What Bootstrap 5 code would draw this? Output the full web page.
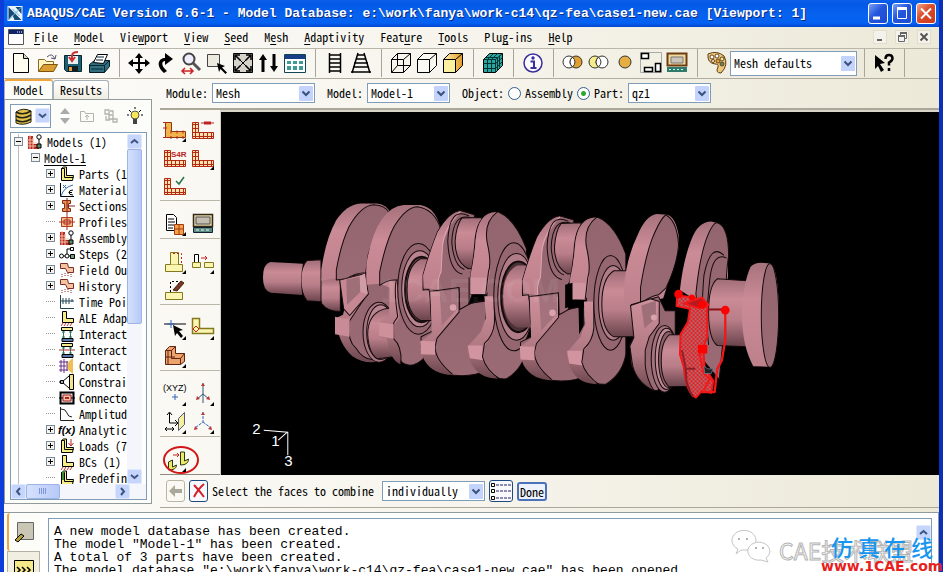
<!DOCTYPE html>
<html lang="en">
<head>
<meta charset="utf-8">
<meta name="viewport" content="width=device-width, initial-scale=1">
<title>ABAQUS/CAE Version 6.6-1</title>
<link rel="stylesheet" href="https://cdn.jsdelivr.net/npm/bootstrap@5.3.0/dist/css/bootstrap.min.css">
<style>
body{font-family:"Noto Sans Mono CJK SC","Liberation Mono",monospace;font-size:12px;line-height:16px;color:#000;background:#0a3fd6;overflow:hidden}
svg{display:block;flex:none}
button{padding:0;border:0;background:none;color:inherit;font:inherit}
.frame{border-left:4px solid #0c3ddb;border-right:4px solid #0b2fb8;background:linear-gradient(90deg,#fcfbf8,#f6f4ec 50%,#ece9d8)}
.titlebar{height:27px;background:linear-gradient(#0b5fe8,#0458e6 15%,#0662ee 50%,#0561f2 85%,#0347cf);color:#fff;padding:0 3px 0 3px}
.titlebar h1{font:bold 13px/27px "Liberation Mono",monospace;text-shadow:1px 1px 0 #0a2a80}
.winbtn{width:20px;height:21px;border:1px solid #fff;border-radius:3px;background:linear-gradient(135deg,#7ba0f5,#2456dd 45%,#1b4bd0)}
.winbtn.close-x{background:linear-gradient(135deg,#f0a48c,#dd4a29 45%,#c93a1c)}
.menus{height:22px;border-bottom:1px solid #b9b6aa;gap:10px}
.menus a{color:#000;text-decoration:none}
.menus u,.tree u{text-underline-offset:2px}
.mdi{width:14px;height:14px;background:#f4f2ea;border:1px solid #e1ded0}
.tools{height:30px;border-bottom:1px solid #b0ada0;padding-left:4px}
.tbtn{width:26px;height:26px;display:grid;place-items:center;flex:none}
.vsep{width:14px;height:28px;flex:none;background:linear-gradient(#a9a699,#a9a699) center/1px 100% no-repeat}
.form-select.cmb{--bs-form-select-bg-img:url("data:image/svg+xml,%3Csvg xmlns='http://www.w3.org/2000/svg' width='14' height='15'%3E%3Crect width='14' height='15' rx='1' fill='%23c3d3fb'/%3E%3Cpath d='M3.500 5.500l3.500 3.500 3.500-3.500' fill='none' stroke='%2339527c' stroke-width='2'/%3E%3C/svg%3E");background:#fff var(--bs-form-select-bg-img) right 1px center/14px 15px no-repeat;height:20px;border:1px solid #7f9db9;border-radius:0;padding:0 16px 0 3px;font-size:12px;line-height:16px;color:#000}
.cmb.tall{height:25px}
.w100{width:103px}.w80{width:83px}.w127{width:127px}
.side{width:148px;flex:none}
.tabs button{height:19px;border:1px solid #a5b0b8;border-bottom:0;border-radius:3px 3px 0 0;background:linear-gradient(#fff,#efece0)}
.tabs button.on{height:20px;width:49px;border-top:2px solid #f0a63a;background:#fcfcf9}
.tabs button:last-child{width:56px}
.sidebox{border:1px solid #919b9c;background:#fcfcf9;padding:4px 4px 3px 5px}
.combo{width:41px;height:24px;border:1px solid #7f9db9;background:#fff}
.treebox{border:1px solid #7f9db9;background:#fff;padding-top:1px}
.tree{background-image:linear-gradient(90deg,transparent 7px,#bbb 7px,#bbb 8px,transparent 8px)}
.trow{height:16px;white-space:nowrap;display:flex;align-items:center;gap:4px;padding-left:3px}
.trow.k{padding-left:35px}
.trow i{flex:none}
.ex{width:9px;height:9px;border:1px solid #7b8a9a;background:linear-gradient(90deg,#000,#000) center/5px 1px no-repeat,#f4f2ec}
.ex.pl{background:linear-gradient(#000,#000) center/5px 1px no-repeat,linear-gradient(#000,#000) center/1px 5px no-repeat,#f4f2ec}
.no{width:9px;height:1px;border-top:1px dotted #999}
.sb{background:#f5f6fb;flex:none}
.thumb{background:linear-gradient(90deg,#d5e1fd,#b7c9f7);border:1px solid #9db4e8;border-radius:2px}
.sbtn{width:15px;height:15px;background:#c6d5fc;border:1px solid #dfe8fe;border-radius:2px;display:grid;place-items:center;flex:none}
.ctx{height:31px;border-bottom:2px solid #aca899;padding-left:6px}
.ctx input{appearance:none;width:13px;height:13px;border:1px solid #33608c;border-radius:50%;background:#fff;margin:0}
.ctx input:checked{background:radial-gradient(circle,#2fa82f 0 2px,#fff 3px)}
.toolbox{width:61px;flex:none;border-right:1px solid #d6d2c2}
.tg{display:grid;grid-template-columns:28px 28px;grid-auto-rows:28px;padding:9px 0 0 1px;border-bottom:1px solid #bbb7a8}
.tg:first-child{padding-top:6px}
.tg:last-child{border-bottom-color:#8d8a7f}
.tg button{display:grid;place-items:center;position:relative}
.tg .fly::after{content:"";position:absolute;right:3px;bottom:2px;border-left:4px solid transparent;border-bottom:4px solid #000}
.view{background:#000;border-top:2px solid #d8d5c8;min-width:0;min-height:0}
.prompt{height:33px;border-bottom:1px solid #aca899;padding-left:6px}
.pbtn{width:19px;height:22px;border:1px solid #b9b6a6;border-radius:3px;display:grid;place-items:center}
.pbtn.b{border-color:#1c4a80;background:#f7f9fd}
.done{height:19px;width:30px;border:2px solid #4b72b8;border-radius:3px;background:#eef2fb;line-height:13px}
.msgarea{height:60px;overflow:hidden;border-top:1px solid #919b9c;flex:none}
.mt{width:36px;flex:none;padding-left:3px}
.mt button{display:grid;place-items:center;width:33px;height:38px}
.mt .on{border-left:2px solid #eda73c;border-radius:3px;background:#fcfcf9}
.mt .off{border:1px solid #b5b2a4;background:#f1eee2}
.msg{border:1px solid #7f9db9;background:#fff;font:13px/13px "Liberation Mono",monospace;padding:6px 0 0 5px;white-space:pre;height:80px}
.msgwrap{border-right:1px solid #919b9c;padding:5px 6px 0 8px;background:#fff}
.wm{position:absolute;right:0;bottom:0;width:224px;height:52px}
</style>
<script src="https://cdn.jsdelivr.net/npm/bootstrap@5.3.0/dist/js/bootstrap.bundle.min.js"></script>
</head>
<body>
<svg width="0" height="0" class="position-absolute" aria-hidden="true">
<defs>
<linearGradient id="au"><stop offset="0" stop-color="#fff3b0"/><stop offset="1" stop-color="#e09a25"/></linearGradient>
<linearGradient id="cy" x2="0" y2="1"><stop offset="0" stop-color="#a06d77"/><stop offset=".3" stop-color="#ca8b96"/><stop offset=".6" stop-color="#b97e89"/><stop offset="1" stop-color="#69434b"/></linearGradient>
<linearGradient id="rm" x2="0" y2="1"><stop offset="0" stop-color="#a6727c"/><stop offset=".35" stop-color="#cb8b97"/><stop offset="1" stop-color="#bd818c"/></linearGradient>
<linearGradient id="lo" x2="0" y2="1"><stop offset="0" stop-color="#ce909b"/><stop offset=".6" stop-color="#b17983"/><stop offset="1" stop-color="#6d474e"/></linearGradient>
<linearGradient id="fc" x2="0" y2="1"><stop offset="0" stop-color="#93656f"/><stop offset="1" stop-color="#9b6b75"/></linearGradient>
<pattern id="hx" width="12" height="12" patternUnits="userSpaceOnUse"><path fill="#e81c20" d="M0 0h12v12H0z"/><path fill="#b06a70" d="M0 0h6v6H0zM6 6h6v6H6z"/></pattern>
<pattern id="gr" width="4" height="4" patternUnits="userSpaceOnUse"><path fill="#ffe2ae" d="M0 0h4v4H0z"/><path d="M0 .5h4M.5 0v4" stroke="#b22a14"/></pattern>
</defs>
<symbol id="L" viewBox="0 0 24 20"><path d="M1.500 2.500h6v10h15v6h-21z" fill="url(#gr)" stroke="#b22a14"/></symbol>
<symbol id="Ly" viewBox="0 0 16 16"><path d="M2.500 2.500l2-1.500h3v8.500h7l-1 5h-11z" fill="#f6ec8a" stroke="#000"/><path d="M2.500 2.500h3v9h9" fill="none" stroke="#000"/></symbol>
<symbol id="Lh" viewBox="0 0 16 16"><path d="M3.500 1.500h4v7h7v4h-11z" fill="#f6ec8a" stroke="#000"/><path d="M2 16l2-3m1 3l2-3m1 3l2-3m1 3l2-3" stroke="#c33"/></symbol>
<symbol id="asm" viewBox="0 0 16 16"><path d="M1 2h5v8h6v5H1z" fill="#b22a22"/><path d="M3 1v14M6 4v11M0 6h7M0 9h10M0 12h12" stroke="#f5c0a8"/><circle cx="12" cy="3" r="2.200" fill="#fff" stroke="#000"/><path d="M12 5v5" stroke="#000"/><path d="M10 10h4v4h-4z" fill="#598c68" stroke="#000"/></symbol>
<symbol id="inter" viewBox="0 0 16 16"><path d="M2.500 1.500h11v3h-11z" fill="#f4ea8e" stroke="#000"/><path d="M4.500 5v7m7-7v7M3 6h3m4 0h3m-10 5h3m4 0h3" stroke="#268056"/><path d="M3 12.500h11v3H3z" fill="#5a78a8" stroke="#000"/></symbol>
<symbol id="up" viewBox="0 0 9 9"><path d="M1 6l3.500-3L8 6" fill="none" stroke="#3c5583" stroke-width="2"/></symbol>
<symbol id="fld" viewBox="0 0 16 16"><path d="M1.500 1.500h7l1 4h5v5h-6l-2-4h-5z" fill="#f4c4a0" stroke="#7b2d25"/><path d="M3 12v3m3-4v4m3-4v4m3-3v3" stroke="#8a2a22" stroke-dasharray="1"/></symbol>
<symbol id="base" viewBox="0 0 24 24"><path d="M2.500 14.500h17v7h-17z" fill="#faf5b0" stroke="#83791c"/></symbol>
</svg>

<div class="frame d-flex flex-column vh-100 overflow-hidden">
<header class="titlebar d-flex align-items-center gap-1">
  <svg width="16" height="15" viewBox="0 0 15 15"><path fill="#e8f4ff" d="M0 0h15v15H0z"/><path fill="#174a72" d="M1 1l13 13H7L5 9 1 14zM8 1h6v7z"/><path d="M1 14L14 1M5 3l7 7" stroke="#6fb3cf"/></svg>
  <h1 class="m-0 text-nowrap flex-grow-1">ABAQUS/CAE Version 6.6-1 - Model Database: e:\work\fanya\work-c14\qz-fea\case1-new.cae [Viewport: 1]</h1>
  <div class="d-flex gap-1">
    <button class="winbtn" aria-label="Minimize"><svg width="18" height="19"><path d="M4 14h7" stroke="#fff" stroke-width="3"/></svg></button>
    <button class="winbtn" aria-label="Maximize"><svg width="18" height="19"><path d="M4 4.500h10" stroke="#fff" stroke-width="3"/><path d="M4.500 4v10.500h9V4" fill="none" stroke="#fff"/></svg></button>
    <button class="winbtn close-x" aria-label="Close"><svg width="18" height="19"><path d="M4 4.500l10 10m0-10l-10 10" stroke="#fff" stroke-width="2"/></svg></button>
  </div>
</header>
<nav class="menus d-flex align-items-center px-1">
  <svg width="16" height="16" viewBox="0 0 16 16"><path d="M.5.500h15v15H.5z" fill="#fff" stroke="#555"/><path fill="#10246b" d="M1 1h14v4H1z"/><path d="M9 3h5" stroke="#fff" stroke-dasharray="1"/></svg>
  <div class="d-flex gap-3 flex-grow-1 text-nowrap">
  <a href="#"><u>F</u>ile</a><a href="#"><u>M</u>odel</a><a href="#">Vie<u>w</u>port</a><a href="#"><u>V</u>iew</a><a href="#"><u>S</u>eed</a><a href="#">M<u>e</u>sh</a><a href="#"><u>A</u>daptivity</a><a href="#">Feat<u>u</u>re</a><a href="#"><u>T</u>ools</a><a href="#">Plu<u>g</u>-ins</a><a href="#"><u>H</u>elp</a></div>
  <div class="d-flex gap-2 me-1">
    <button class="mdi" aria-label="Minimize viewport"><svg width="12" height="12"><path d="M3 9h5" stroke="#666" stroke-width="2"/></svg></button>
    <button class="mdi" aria-label="Restore viewport"><svg width="12" height="12"><path d="M2.500 5.500h6v5h-6zM4.500 5V2.500h6v5H9" fill="none" stroke="#666"/><path d="M2 5h7M4 2h7" stroke="#666" stroke-width="2"/></svg></button>
    <button class="mdi" aria-label="Close viewport"><svg width="12" height="12"><path d="M2.500 2.500l7 7m0-7l-7 7" stroke="#555" stroke-width="2"/></svg></button>
  </div>
</nav>
<div class="tools d-flex align-items-center">
  <button class="tbtn" aria-label="New"><svg width="24" height="24"><path d="M4.500 2.500h10l5 5v14h-15z" fill="#fffef0" stroke="#000"/><path d="M14.500 2.500v5h5" fill="#ddd6b8" stroke="#000"/></svg></button>
  <button class="tbtn" aria-label="Open"><svg width="24" height="24"><path d="M3.500 20V8.500h6l2 2h7V14" fill="#fff5c0" stroke="#8a6a20"/><path d="M3.500 20.500l5-7h14l-4 7z" fill="#d99d31" stroke="#7b5410"/><path d="M12 6q5-5 8 2m0 0l1-4m-1 4l-4-1" fill="none" stroke="#556"/></svg></button>
  <button class="tbtn" aria-label="Save"><svg width="24" height="24"><path d="M3.500 4.500h17v16h-15l-2-2z" fill="#1d6073" stroke="#0b2530"/><path fill="#e8eff2" d="M7 5h10v8H7z"/><path fill="#101c22" d="M7 15h10v5H7z"/><path fill="#e0a040" d="M8 16h3v4H8z"/><path d="M17 1q-6 0-6 4v4m-3-3l3 4 3-4" fill="none" stroke="#c33" stroke-width="2"/></svg></button>
  <button class="tbtn" aria-label="Print"><svg width="24" height="24"><path d="M2.500 13.500l5-4h15v6l-5 6h-15z" fill="#2f6f7f" stroke="#071c26"/><path d="M6.500 11.500l4-8h10l-4 9z" fill="#fff" stroke="#000"/><path d="M2.500 14.500h15l5-5m-5 5v7M4 18h12M10 6h7m-8 3h7" stroke="#082632" fill="none"/></svg></button>
  <i class="vsep"></i>
  <button class="tbtn" aria-label="Pan"><svg width="24" height="24"><path d="M12 2l4 5h-3v4h5V8l5 4-5 4v-3h-5v5h3l-4 5-4-5h3v-5H6v3l-5-4 5-4v3h5V7H8z"/></svg></button>
  <button class="tbtn" aria-label="Rotate"><svg width="24" height="24"><path d="M11 22C2 14 6 7 12 7V2l8 6-8 6v-4c-3 0-5 4 2 10z"/></svg></button>
  <button class="tbtn" aria-label="Magnify"><svg width="24" height="24"><circle cx="10" cy="8" r="5.500" fill="#eef" stroke="#444" stroke-width="2"/><path d="M14 12l7 7" stroke="#555" stroke-width="3"/><path d="M4 20h9M6 17l-3 3 3 3m5-6l3 3-3 3" fill="none" stroke="#c22" stroke-width="1.500"/></svg></button>
  <button class="tbtn" aria-label="Box zoom"><svg width="26" height="24"><path d="M3.500 3.500h12v12h-12z" fill="#eceadf" stroke="#444"/><path d="M13 12l8 3-3 1.500 5 5-1.500 1.500-5-5-1.500 3z"/></svg></button>
  <button class="tbtn" aria-label="Auto-fit"><svg width="24" height="24"><path d="M2.500 2.500h19v19h-19z" fill="#d5d3ca" stroke="#000"/><path d="M5 5l14 14M19 5L5 19M4 9V4h5m6 0h5v5m0 6v5h-5m-6 0H4v-5" fill="none" stroke="#000" stroke-width="1.500"/><path fill="#d5d3ca" d="M9 9h6v6H9z"/><path d="M9 9l6 6M15 9l-6 6" stroke="#000"/></svg></button>
  <button class="tbtn" aria-label="Cycle views"><svg width="24" height="24"><path d="M6 3l4 6H7.500v12h-3V9H2zM17 21l4-6h-2.500V3h-3v12H13z"/></svg></button>
  <button class="tbtn" aria-label="View table"><svg width="24" height="24"><path d="M1.500 3.500h21v18h-21z" fill="#fff" stroke="#145"/><path fill="#173e86" d="M2 4h20v4H2z"/><path d="M4 10h4v3H4zm6 0h4v3h-4zm6 0h4v3h-4zM4 15h4v4H4zm6 0h4v4h-4zm6 0h4v4h-4z" fill="#409a96"/></svg></button>
  <i class="vsep"></i>
  <button class="tbtn" aria-label="Parallel"><svg width="24" height="24"><path d="M6.500 2v20m11-20v20M6 4h12M6 8h12M6 12h12M6 16h12M6 20h12" stroke="#000" stroke-width="1.500"/></svg></button>
  <button class="tbtn" aria-label="Perspective"><svg width="24" height="24"><path d="M9 2L3 22m12-20l6 20M8 4h8M7 8h10M5 12h14M4 16h16M2 21h20" stroke="#000" stroke-width="1.500"/></svg></button>
  <i class="vsep"></i>
  <button class="tbtn" aria-label="Wireframe"><svg width="24" height="24"><path d="M2.500 8.500h12v13h-12zM8.500 2.500h13v12h-13zM2.500 8.500l6-6m6 6l7-6m-7 19l7-7m-19 7l6-7" fill="none" stroke="#000"/></svg></button>
  <button class="tbtn" aria-label="Hidden line"><svg width="24" height="24"><path d="M2.500 8.500h12v13h-12zl6-6h13l-7 6m7-6v12l-7 7" fill="#faf9f4" stroke="#000"/></svg></button>
  <button class="tbtn" aria-label="Shaded"><svg width="24" height="24"><path d="M2.500 8.500l6-6h13v12l-7 7h-12z" fill="url(#au)" stroke="#000"/><path d="M2.500 8.500h12v13h-12z" fill="#faf0a0" stroke="#000"/><path d="M14.500 8.500l7-6" stroke="#000"/></svg></button>
  <i class="vsep"></i>
  <button class="tbtn" aria-label="Show mesh"><svg width="24" height="24"><path d="M2.500 8.500l6-6h13v12l-7 7h-12z" fill="#2aa6a0" stroke="#000"/><path d="M2.500 8.500h12v13m0-13l7-6M6.500 8.500v13m4-13v13m-8-9h12l7-6m-19 11h12l7-7M6.500 8.500l6-6m-2 6l6-6m-12 4h12v13m2-15v12" fill="none" stroke="#033"/></svg></button>
  <i class="vsep"></i>
  <button class="tbtn" aria-label="Query"><svg width="24" height="24"><circle cx="12" cy="12" r="9" fill="#fbfaff" stroke="#3b2f9a" stroke-width="1.500"/><circle cx="12" cy="7" r="1.700" fill="#3b2f9a"/><path d="M9.500 10.500H13V17m-3.500 0h6" stroke="#3b2f9a" stroke-width="2" fill="none"/></svg></button>
  <i class="vsep"></i>
  <button class="tbtn" aria-label="Replace"><svg width="24" height="24"><circle cx="8" cy="11" r="6" fill="#fff" stroke="#333"/><circle cx="15" cy="11" r="6" fill="#e0a030" stroke="#333"/><path d="M11.500 6q5 5 0 10q-5-5 0-10" fill="#fff" stroke="#333"/></svg></button>
  <button class="tbtn" aria-label="Remove"><svg width="24" height="24"><circle cx="8" cy="11" r="6" fill="#f7ec8c" stroke="#333"/><circle cx="15" cy="11" r="6" fill="#fff" stroke="#333"/><path d="M11.500 6q5 5 0 10q-5-5 0-10" fill="#fff" stroke="#333"/></svg></button>
  <button class="tbtn" aria-label="All"><svg width="24" height="24"><circle cx="12" cy="11" r="6" fill="#e5ae43" stroke="#333"/></svg></button>
  <button class="tbtn" aria-label="Layout"><svg width="24" height="24"><path d="M1.500 1.500h21v20h-21z" fill="none" stroke="#aaa"/><path d="M2.500 2.500h7v5h-7zM16.500 12.500h5v8h-5zM5.500 16.500h8v4h-8z" fill="#fff" stroke="#000" stroke-width="1.500"/></svg></button>
  <button class="tbtn" aria-label="Manager"><svg width="24" height="24"><path d="M2.500 2.500h19v12h-19z" fill="#f1d9a0" stroke="#6b3d10" stroke-width="2"/><path d="M6 6h12v6H6z" fill="#ccc4b8" stroke="#777"/><path d="M2 16h20v5H2z" fill="#2f7a6a"/><path d="M4 18.500h16" stroke="#bfe" stroke-dasharray="2"/></svg></button>
  <i class="vsep"></i>
  <button class="tbtn" aria-label="Colors"><svg width="24" height="24"><path d="M3 3Q12-1 19 5q5 9-3 17-6 0-3-6 1-3-3-3-8-1-7-10z" fill="#edc77c" stroke="#5b3a10"/><g fill="#fff" stroke="#642"><circle cx="7" cy="6" r="2"/><circle cx="12" cy="5" r="2"/><circle cx="8" cy="10" r="1.500"/><circle cx="13" cy="10" r="2" fill="#e9a72e"/><circle cx="17" cy="8" r="2" fill="#f5ea90"/><circle cx="17" cy="13" r="2" fill="#5a8a60"/></g></svg></button>
  <label class="visually-hidden" for="colr">Color mapping</label>
  <select id="colr" class="form-select cmb w127 tall"><option>Mesh defaults</option></select>
  <i class="vsep"></i>
  <button class="tbtn" aria-label="Context help"><svg width="24" height="24"><path d="M3 4l10 8-5 1 4 6-3 2-3-6-3 3z"/><path d="M13.500 8q0-4 3.500-4t3.500 3.500q0 2-3.500 4v3M17 17v3" fill="none" stroke="#000" stroke-width="2.500"/></svg></button>
  <i class="vsep"></i>
</div>

<div class="d-flex flex-grow-1 overflow-hidden">
  <aside class="side d-flex flex-column pb-1">
    <div class="tabs d-flex align-items-end" role="tablist"><button class="on" role="tab">Model</button><button role="tab">Results</button></div>
    <div class="sidebox d-flex flex-column flex-grow-1 overflow-hidden">
      <div class="d-flex align-items-center justify-content-between pb-1 pe-1">
        <button class="combo d-flex align-items-center justify-content-between ps-1" aria-label="Database"><svg width="17" height="18"><path d="M1 5q7-5 15-1v11q-8 4-15 1z" fill="#e2c04d" stroke="#221"/><path d="M1 5q7 4 15-1M1 9q7 4 15-1M1 13q7 4 15-1" fill="none" stroke="#221" stroke-width="1.500"/></svg><span class="sbtn"><svg width="9" height="9" viewBox="0 0 9 9"><path d="M1 3l3.500 3L8 3" fill="none" stroke="#3c5583" stroke-width="2"/></svg></span></button>
        <button aria-label="Step"><svg width="12" height="18"><path d="M6 1l5 6H1zM6 17l5-6H1z" fill="#aaa"/></svg></button>
        <button aria-label="Up level"><svg width="16" height="16"><path d="M1.500 3.500h4l1 2h8v8h-13z" fill="none" stroke="#b3b3ab"/><path d="M8 12V7M6 9l2-2 2 2" stroke="#b3b3ab" fill="none"/></svg></button>
        <button aria-label="Link"><svg width="16" height="16"><path d="M2 2h4v4H2zM6 7h4v4H6zM10 11h4v3h-4zM7 3h3v3M3 8v4h4" fill="none" stroke="#b3b3ab" stroke-width="1.300"/></svg></button>
        <button aria-label="Tip"><svg width="16" height="18"><path d="M8 0v2M2 3l2 2m10-2l-2 2M0 8h2m12 0h2" stroke="#000"/><circle cx="8" cy="8" r="4" fill="#f8e858" stroke="#554"/><path d="M6 12h4v5H6z" fill="#444"/></svg></button>
      </div>
      <div class="treebox d-flex flex-column flex-grow-1 overflow-hidden">
        <div class="d-flex flex-grow-1 overflow-hidden">
          <div class="tree flex-grow-1 overflow-hidden" role="tree">
            <div class="trow"><i class="ex"></i><svg width="16" height="16"><use href="#asm"/></svg>Models (1)</div>
            <div class="trow ps-3 ms-1"><i class="ex"></i><u>Model-1</u></div>
            <div class="trow k"><i class="ex pl"></i><svg width="16" height="16"><use href="#Ly"/></svg>Parts (1)</div>
            <div class="trow k"><i class="ex pl"></i><svg width="16" height="16"><path d="M1.500 1v13.500H15" fill="none" stroke="#000"/><path d="M2 14Q5 5 14 3M4 3l3 3M4 6l3-3" fill="none" stroke="#36a"/><path d="M14 8q-4 0-4 2.500t4 2.500m-4-2.500h3" fill="none" stroke="#000"/></svg>Material</div>
            <div class="trow k"><i class="ex pl"></i><svg width="16" height="16"><path d="M3.500 2.500h8v3h-2v5h2v3h-8v-3h2v-5h-2z" fill="#f0924c" stroke="#7b2d15"/><path d="M8 0v16M8 8h8" stroke="#822"/></svg>Sections</div>
            <div class="trow k"><i class="no"></i><svg width="16" height="16"><path d="M2.500 3.500h11v9h-11z" fill="#f6b98c" stroke="#b3411c"/><path d="M8 0v16M0 8h16M5 6h6v4H5z" fill="none" stroke="#a32"/></svg>Profiles</div>
            <div class="trow k"><i class="ex pl"></i><svg width="16" height="16"><use href="#asm"/></svg>Assembly</div>
            <div class="trow k"><i class="ex pl"></i><svg width="16" height="16"><circle cx="2.500" cy="10" r="2" fill="#fff" stroke="#000"/><circle cx="8" cy="10" r="2" fill="#fff" stroke="#000"/><path d="M5 10h1m4 0h2M8 8V3h3" stroke="#000" fill="none"/><path d="M11.500 1.500h3v3h-3z" fill="#fff" stroke="#000"/><path d="M11.500 8.500h4v4h-4z" fill="#7a9a7a" stroke="#000"/></svg>Steps (2)</div>
            <div class="trow k"><i class="ex pl"></i><svg width="16" height="16"><use href="#fld"/></svg>Field Ou</div>
            <div class="trow k"><i class="ex pl"></i><svg width="16" height="16"><use href="#fld"/></svg>History O</div>
            <div class="trow k"><i class="no"></i><svg width="16" height="16"><path d="M1.500 1v13.500H15M2 7h13M4 4v6m3-6v6m3-6v6m3-5v3" fill="none" stroke="#245"/></svg>Time Poin</div>
            <div class="trow k"><i class="no"></i><svg width="16" height="16"><use href="#Lh"/></svg>ALE Adap</div>
            <div class="trow k"><i class="no"></i><svg width="16" height="16"><use href="#inter"/></svg>Interact</div>
            <div class="trow k"><i class="no"></i><svg width="16" height="16"><use href="#inter"/><path d="M0 8h16" stroke="#a33"/></svg>Interact</div>
            <div class="trow k"><i class="no"></i><svg width="16" height="16"><path d="M14 0q-12 8 0 16z" fill="#eebf52"/><path d="M2 2v12M5 1v14M8 3v10M0 4h9M0 8h7M0 12h9" stroke="#6a2f8a"/></svg>Contact C</div>
            <div class="trow k"><i class="no"></i><svg width="16" height="16"><path d="M10.500.500h4v15h-4z" fill="#f2e48a" stroke="#000"/><path d="M3 8l7-6M3 8l7 6M0 8h3" stroke="#000"/><path d="M1.500 6.500h3v3h-3z" fill="#9ab" stroke="#000"/></svg>Constrain</div>
            <div class="trow k"><i class="no"></i><svg width="16" height="16"><path d="M1.500 2.500h13v11h-13z" fill="#ddd" stroke="#000" stroke-width="2"/><path d="M4 5h8v6H4z" fill="#f2c0a8" stroke="#a22"/><path d="M6 7h4v2H6z" fill="#a22"/><path d="M0 8h4m8 0h4" stroke="#000"/></svg>Connector</div>
            <div class="trow k"><i class="no"></i><svg width="16" height="16"><path d="M1.500 1v13.500H15M2 3q5 0 6 4t5 4" fill="none" stroke="#222"/></svg>Amplitud</div>
            <div class="trow k"><i class="ex pl"></i><svg width="16" height="16" overflow="visible"><text x="-1" y="12" font-family="Liberation Sans" font-size="11" font-weight="bold" font-style="italic">f(x)</text></svg>Analytic</div>
            <div class="trow k"><i class="ex pl"></i><svg width="16" height="16"><use href="#Ly"/><path d="M12 1v6M9.500 5l2.500 3 2.500-3" stroke="#b22" fill="none"/></svg>Loads (7)</div>
            <div class="trow k"><i class="ex pl"></i><svg width="16" height="16"><use href="#Lh"/></svg>BCs (1)</div>
            <div class="trow k"><i class="no"></i><svg width="16" height="16"><use href="#Ly"/><path d="M4 1v9" stroke="#3a8a3a" stroke-width="2"/></svg>Predefin</div>
          </div>
          <div class="sb d-flex flex-column me-1">
            <button class="sbtn" aria-label="Scroll up"><svg width="9" height="9"><use href="#up"/></svg></button>
            <div class="thumb h-50"></div><div class="flex-grow-1"></div>
            <button class="sbtn" aria-label="Scroll down"><svg width="9" height="9" viewBox="0 0 9 9"><path d="M1 3l3.500 3L8 3" fill="none" stroke="#3c5583" stroke-width="2"/></svg></button>
          </div>
        </div>
        <div class="sb d-flex pe-3">
          <button class="sbtn" aria-label="Scroll left"><svg width="9" height="9"><path d="M6 1L3 4.500 6 8" fill="none" stroke="#3c5583" stroke-width="2"/></svg></button>
          <div class="thumb w-25 px-3 d-grid justify-content-center align-items-center"><svg width="8" height="6"><path d="M.5 0v6m2-6v6m2-6v6m2-6v6" stroke="#7d97d8"/></svg></div><div class="flex-grow-1"></div>
          <button class="sbtn" aria-label="Scroll right"><svg width="9" height="9"><path d="M3 1l3 3.500L3 8" fill="none" stroke="#3c5583" stroke-width="2"/></svg></button>
        </div>
      </div>
    </div>
  </aside>
  <main class="d-flex flex-column flex-grow-1 ms-2 overflow-hidden">
    <form class="ctx d-flex align-items-center text-nowrap">
      <label for="m1" class="me-1">Module:</label><select id="m1" class="form-select cmb w100"><option>Mesh</option></select>
      <label for="m2" class="ms-2 me-1 ps-1">Model:</label><select id="m2" class="form-select cmb w80"><option>Model-1</option></select>
      <span class="ms-2 me-1 ps-1">Object:</span>
      <input type="radio" name="o" id="o1"><label for="o1" class="ms-1 me-1">Assembly</label>
      <input type="radio" name="o" id="o2" checked><label for="o2" class="ms-1 me-1">Part:</label>
      <select class="form-select cmb w80" aria-label="Part"><option>qz1</option></select>
    </form>
    <div class="d-flex flex-grow-1 overflow-hidden">
      <div class="toolbox">
        <div class="tg">
          <button class="fly" aria-label="Seed part"><svg width="24" height="20"><path d="M2.500 2.500h6v9h14v6h-20z" fill="#f2b34c" stroke="#8a3a10"/><path d="M0 2.500h4M0 8h4m-4 9.500h4m4-7v3m6-3v3m6-3v3M8 16v3m6-3v3m6-3v3" stroke="#b22"/></svg></button>
          <button aria-label="Assign controls"><svg width="24" height="20"><use href="#L"/><path d="M10 3h13" stroke="#b22"/><path d="M13 1.500h7v3h-7z" fill="#b22"/></svg></button>
          <button aria-label="Element type"><svg width="24" height="20"><use href="#L"/><text x="8" y="9" font-family="Liberation Sans" font-size="8" font-weight="bold" fill="#b22">S4R</text></svg></button>
          <button class="fly" aria-label="Mesh part"><svg width="24" height="20"><use href="#L"/></svg></button>
          <button aria-label="Verify mesh"><svg width="24" height="20"><use href="#L"/><path d="M13 5l3 3 5-7" fill="none" stroke="#26734d" stroke-width="1.500"/></svg></button>
        </div>
        <div class="tg">
          <button class="fly" aria-label="Create part"><svg width="24" height="24"><path d="M3.500 2.500h7l3 3v13h-10z" fill="#fff" stroke="#000"/><path d="M5 7h6M5 10h7m-7 3h6m-6 3h5" stroke="#000"/><path d="M11.500 12.500h9v10h-9z" fill="#f3a347" stroke="#a33a10"/><path d="M11 17h10m-5-5v11" stroke="#a33a10"/></svg></button>
          <button aria-label="Part manager"><svg width="24" height="24"><path d="M2.500 2.500h19v12h-19z" fill="#e5d6a5" stroke="#33291a" stroke-width="1.500"/><path d="M5 5h14v7H5z" fill="#c4bdb2" stroke="#555"/><path d="M2.500 15.500h19v5h-19z" fill="#5d8a80" stroke="#123"/><path d="M5 18h14" stroke="#dff" stroke-dasharray="3 2"/></svg></button>
        </div>
        <div class="tg">
          <button class="fly" aria-label="Extrude"><svg width="24" height="24"><use href="#base"/><path d="M7.500 14.500v-12h8v12" fill="#faf5b0" stroke="#83791c"/><path d="M10 3.500h8.500V14" fill="none" stroke="#b22" stroke-dasharray="2"/></svg></button>
          <button class="fly" aria-label="Move feature"><svg width="24" height="24"><path d="M1.500 12.500h8v5h-8zM13.500 12.500h9v5h-9z" fill="#faf5b0" stroke="#83791c"/><path d="M3.500 12V4.500h4V12" fill="#fff" stroke="#000"/><path d="M10 8h6m-2-2l2 2-2 2" fill="none" stroke="#c22"/></svg></button>
          <button aria-label="Delete feature"><svg width="24" height="24"><use href="#base"/><path d="M7.500 14V3.500h8V8" fill="none" stroke="#000" stroke-dasharray="2"/><path d="M10 12l8-9 3 2-7 8z" fill="#7b3a20" stroke="#422"/></svg></button>
        </div>
        <div class="tg">
          <button class="fly" aria-label="Partition edge"><svg width="24" height="24"><path d="M1 8h22" stroke="#000"/><path d="M8 4v8M4 8h8" stroke="#36b"/><path d="M10 9l10 5-4 1 4 5-2 2-4-5-2 3z"/></svg></button>
          <button class="fly" aria-label="Partition face"><svg width="24" height="24"><path d="M1.500 2.500h7v10h14v5h-21z" fill="#faf5b0" stroke="#83791c" stroke-width="1.500"/><path d="M5 10l3 3-3 3-3-3z" fill="none" stroke="#c22"/></svg></button>
          <button class="fly" aria-label="Partition cell"><svg width="24" height="24"><path d="M2.500 6.500l4-4h6v7h9v8l-4 3h-15z" fill="#eda36c" stroke="#5f2512"/><path d="M2.500 6.500h6v8h9v6m-9-14l4-4m5 12l4-5M5 7v13m-3-7h10" fill="none" stroke="#5f2512"/></svg></button>
        </div>
        <div class="tg">
          <button class="fly" aria-label="Datum point"><svg width="26" height="24"><text x="1" y="9" font-family="Liberation Sans" font-size="9">(XYZ)</text><path d="M13 12v6m-3-3h6" stroke="#36b"/></svg></button>
          <button class="fly" aria-label="Datum axis"><svg width="24" height="24"><path d="M12 1v20M12 12l-6 5m6-5l6 5" stroke="#357" fill="none"/><path d="M10 4l2-3 2 3zM5 18l1-4 3 3zM19 18l-1-4-3 3z" fill="#b33"/></svg></button>
          <button class="fly" aria-label="Datum plane"><svg width="24" height="24"><path d="M6.500 3v10h8M4 5l2.500-3L9 5m3 5l3 3-3 3M2 19h9m-7-2l-2 2 2 2m5-4l2 2-2 2" fill="none" stroke="#000"/><path d="M15.500 8.500l6-6v12l-6 6z" fill="#f6ee98" stroke="#557"/></svg></button>
          <button class="fly" aria-label="Datum csys"><svg width="24" height="24"><path d="M12 2v10l-8 6m8-6l8 6" fill="none" stroke="#36b" stroke-dasharray="3 1"/><path d="M10 5l2-3 2 3zM3 20l1-4 3 3zM21 20l-1-4-3 3z" fill="#b33"/></svg></button>
        </div>
        <div class="tg">
          <button class="fly" aria-label="Combine faces"><svg width="34" height="28" viewBox="-5 -2 34 28" overflow="visible"><path d="M2.500 14v8q8 0 8-5l-4 2v-7zM14.500 4v13q8 0 8-6l-4 2V4z" fill="#f0e86a" stroke="#263a10"/><path d="M7 7h6m-2-2l2 2-2 2" stroke="#c22" fill="none"/><ellipse cx="15" cy="12" rx="17" ry="13" fill="none" stroke="#d01818" stroke-width="2"/></svg></button>
        </div>
      </div>
      <section class="view flex-grow-1" aria-label="Viewport: 1">
        <svg width="100%" height="100%" viewBox="221 112 717 363">
          <g transform="translate(250 190) scale(.33333)" stroke="#140b0d" stroke-width="3" stroke-linejoin="round">
            <path d="M206 262h64v102q-40 0-56-24-14-38-8-78z" fill="url(#cy)"/>
            <path d="M170 211l42-2v126l-42-3q-18-22-18-62t18-59z" fill="url(#cy)"/>
            <path d="M60 216l98 5q-10 46-2 94l-94-7q-24-6-24-46t22-46z" fill="url(#cy)" stroke="none"/>
            <path d="M213 272v-32q12-90 45-150 30-46 72-50h50q30 4 40 28l-70 180z" fill="url(#rm)" stroke="none"/>
            <path d="M258 270v-30q14-80 38-130 36-64 74-66 36 2 46 24-40 50-62 124l-8 56q-30 0-58 18z" fill="url(#fc)"/>
            <path d="M256 384l22-10 4-16-14-88 78-22 10 40 90 10 30 100-60 104q-60 30-110-4-44-40-50-114z" fill="url(#lo)" stroke="none"/>
            <path d="M346 248l90 30v120l-40 105q-50 20-80-30-24-20-20-70l0-8 54-82z" fill="url(#fc)"/>
            <path d="M268 270l76-20 10 62-56 64-18-20z" fill="#c58893"/><path d="M288 268l42-8v46l-40 38z" fill="#9f6f79" stroke="none"/><path d="M328 258l16-8 8 62-22-6z" fill="#d29ca6" stroke="none"/>
            <path d="M254 380q24 8 44 4v56l-44-8z" fill="#c98b96" stroke="none"/>
            <ellipse cx="386" cy="426" rx="48" ry="90" fill="#a8747f"/><ellipse cx="391" cy="426" rx="42" ry="82" fill="#b98591"/>
            <path d="M412 354q-60 10-60 80 4 60 30 72l60-8V360z" fill="url(#cy)"/>
            <path d="M348 284v-60q14-90 46-136 28-40 66-43h50q46 8 60 70l-30 230-150-64z" fill="url(#rm)" stroke="none"/>
            <path d="M388 286v-40q18-90 44-138 36-58 70-58 50 8 68 64v250q-20 140-80 160-50 10-60-70l-6-100 20-84q-30-4-56 16z" fill="url(#fc)"/>
            <path d="M418 272l22 10q0 60 8 100l-14 20v44q20 20 16 76-30-10-40-76l-24-6v-46l30-16z" fill="url(#lo)" stroke="none"/>
            <path d="M438 270q-8 30 4 110l-12 18v48q24 20 22 72" fill="none"/>
            <path d="M386 396l44 6v44l-44-8z" fill="#ce919c" stroke="none"/>
            <ellipse cx="504" cy="296" rx="62" ry="136" fill="#95666f"/><ellipse cx="508" cy="296" rx="54" ry="114" fill="#b98490"/><ellipse cx="514" cy="298" rx="50" ry="98" fill="#6f4850" stroke-width="6"/>
            <path d="M510 206h60v185h-60q-40-20-40-92t40-93z" fill="url(#cy)"/>
          </g>
          <g transform="translate(250 190) scale(.33333)">
            <g id="thr" stroke="#140b0d" stroke-width="3" stroke-linejoin="round">
              <path d="M518 300v-46q20-70 44-130 36-62 70-62l40 12v220l-64 180q-70-20-60-100l-12-76z" fill="url(#fc)"/>
              <path d="M518 256q20-70 44-130 36-62 70-62-50 60-56 110l-4 72q-12 20-8 54l-44-8z" fill="url(#rm)" stroke="none"/>
              <path d="M630 64q-50 50-54 106l-4 76q-12 20-8 54" fill="none" stroke="#dba6b0"/>
              <path d="M656 78q-60-30-64 76 4 90 44 98M664 84q-56-20-60 72 6 72 38 82" fill="none"/>
              <path d="M634 84l60-2v150l-40 4q-40-20-40-82 4-50 20-70z" fill="url(#cy)"/>
              <path d="M538 304l88-12 2 66 36-20 90-10-40 210q-60 30-130 12-50-30-72-80v-30l40-20-10-40z" fill="url(#fc)"/>
              <path d="M510 454l34-24-4-126h86v62l-64 78-10 40q10 40 56 70-60 0-86-44-12-26-12-56z" fill="url(#lo)" stroke="none"/>
              <path d="M626 292v74l-66 78-6 26q0 40 52 82" fill="none"/>
              <path d="M568 304l54-6v56l-48 52z" fill="#a3727c" stroke="none"/><circle cx="608" cy="352" r="10" fill="#d9a2ac" stroke="none"/>
              <path d="M510 452l44 2v40l-42-2z" fill="#d295a0" stroke="none"/>
              <path d="M660 312v-54q10-50 14-110 8-84 70-82 50 20 84 110v300q-10 60-60 90-60 4-96-60l12-60 20-28 6-110z" fill="url(#fc)"/>
              <path d="M660 310v-56q12-50 16-106 8-84 64-82-40 30-30 90 10 50 8 90l-10 66z" fill="url(#rm)" stroke="none"/>
              <path d="M660 262h48v50h-48z" fill="#d093a0" stroke="none"/>
              <path d="M740 66q-40 30-30 90 14 60 4 90l-8 66M656 262v80l46-12" fill="none"/>
              <path d="M702 318h30v80q-4 40-30 70l-10 30q10 40 50 68-60-2-80-48-14-20-10-50l10-10 30-34 14-40z" fill="url(#lo)" stroke="none"/>
              <path d="M652 466h44l2 44-40-6z" fill="#d194a0" stroke="none"/>
              <path d="M732 318v80q-4 40-30 62l-6 40q10 40 54 68" fill="none"/>
            </g>
            <ellipse cx="790" cy="320" rx="60" ry="162" fill="#95666f" stroke="#140b0d" stroke-width="3"/><ellipse cx="798" cy="320" rx="56" ry="130" fill="#b07c87" stroke="#140b0d" stroke-width="3"/><ellipse cx="804" cy="320" rx="52" ry="106" fill="#4b3037" stroke="#140b0d" stroke-width="6"/>
            <path d="M800 226h110v186H800q-42-20-42-92t42-94z" fill="url(#cy)"/>
            <use href="#thr" x="298" y="16"/>
            <path d="M944 284l22-6v54l34 4v70l-14 26-2-90-40 12z"/>
            <g fill="none" stroke="#140b0d" stroke-width="3"><ellipse cx="1080" cy="338" rx="50" ry="142" fill="#95666f"/><ellipse cx="1088" cy="338" rx="44" ry="112" fill="#b07c87"/></g>
            <path d="M1090 242h90v198h-90q-36-20-36-98t36-100z" fill="url(#cy)" stroke="#140b0d" stroke-width="3"/>
          </g>
          <g transform="translate(510 190) scale(.33333)" stroke="#140b0d" stroke-width="3" stroke-linejoin="round">
            <path d="M340 342v-54q10-90 40-150 26-64 60-66l30 2q24 6 34 60v30q0 30-30 110l-16 50-76 20z" fill="url(#rm)" stroke="none"/>
            <path d="M390 342v-50q14-90 34-144 24-60 42-74 34 20 38 90-4 60-38 130l-22 20q-30 6-54 28z" fill="url(#fc)"/>
            <path d="M362 344l82-24 20 42h30v200l-56 40q-50-10-76-80l-4-60 14-26z" fill="url(#fc)"/>
            <path d="M360 346l60-20 26 8v66l-30 40-12 40v46q4 40 26 76-60-30-66-90l-6-44 12-26z" fill="url(#lo)"/>
            <path d="M392 346l44-14v52l-34 30z" fill="#9f6f79" stroke="none"/><circle cx="430" cy="382" r="9" fill="#d9a2ac" stroke="none"/>
            <ellipse cx="462" cy="506" rx="40" ry="100" fill="#a3727c"/><ellipse cx="468" cy="506" rx="34" ry="92" fill="#c08a95"/><ellipse cx="474" cy="508" rx="30" ry="84" fill="#8c5f68"/>
            <path d="M476 434h70v154l-70 2q-24-20-24-78t24-78z" fill="url(#cy)"/>
            <path d="M508 300q10-90 34-150 20-56 60-56 40 4 50 70v90q-4 80-30 110l-60-30z" fill="url(#rm)" stroke="none"/>
            <path d="M556 310q10-100 30-160 20-54 34-52 34 10 34 100-10 60-8 160l-20 210-50-60z" fill="url(#fc)"/>
            <path d="M640 196q-40-40-60 60-10 120 0 200M648 204q-40-20-50 60-14 120-4 200" fill="none"/>
            <path d="M620 266l90 6v198l-90-4q-26-20-26-100t26-100z" fill="url(#cy)"/>
            <path d="M720 230q12-12 30-12l30 2q24 20 24 150 0 100-28 160l-48-2q-34-60-34-160 4-90 26-138z" fill="url(#rm)" stroke="none"/>
            <ellipse cx="778" cy="376" rx="26" ry="156" fill="url(#fc)"/>
            <g stroke="#f01818" stroke-width="6">
              <path d="M500 316l50 6 40 20v96l-12 34 4 60 26 40-6 36-28-6-18 20q-30-14-36-90l-12-40 2-60 22-36 6-40-40-8z" fill="url(#hx)"/>
              <path d="M514 480l12 56 2 40q10 30 20 44M528 536h26" fill="none" stroke="#8d2028"/>
              <path d="M520 340l54-18 20 22-30 10z" fill="#b31a20"/>
              <path d="M566 490l14 60 20 20M580 600l20-40" fill="none"/>
              <path d="M644 360v90l-10 60-14 26-8 70h-40" fill="none" stroke-width="7"/>
              <path d="M594 358h50" stroke="#8a1015"/>
              <g fill="#f00" stroke="none"><circle cx="504" cy="312" r="13"/><circle cx="644" cy="360" r="13"/><path d="M562 464h28v26h-28z"/><circle cx="574" cy="344" r="12"/><circle cx="544" cy="322" r="9"/></g>
              <path d="M580 528l12 8h16l-6 14h-20z" fill="#222" stroke="#789" stroke-width="2"/>
            </g>
          </g>
          <text x="380" y="302" fill="#fff" fill-opacity=".07" font-family="Liberation Sans" font-weight="bold" font-size="34">1CAE.COM</text>
          <g stroke="#fff" fill="none"><path d="M287.500 455v-23l-24-2M287 432l-9 8"/></g>
          <g fill="#fff" font-family="Liberation Sans" font-size="15"><text x="252" y="434">2</text><text x="271" y="446">1</text><text x="284" y="466">3</text></g>
        </svg>
      </section>
    </div>
    <div class="prompt d-flex align-items-center gap-1 text-nowrap">
      <button class="pbtn" aria-label="Back"><svg width="15" height="14"><path d="M1 7l6-6v4h7v4H7v4z" fill="#aaa79b"/></svg></button>
      <button class="pbtn b" aria-label="Cancel"><svg width="14" height="16"><path d="M2 2q5 5 10 12M12 1Q6 6 2 14" fill="none" stroke="#d3202a" stroke-width="2"/></svg></button>
      <label for="pm">Select the faces to combine</label>
      <select id="pm" class="form-select cmb w100 ms-1"><option>individually</option></select>
      <button class="pbtn b w-auto" aria-label="Options"><svg width="22" height="20"><path d="M1.500 2.500h3v3h-3zM1.500 8.500h3v3h-3zM1.500 15.500h3v3h-3z" fill="#ffd" stroke="#000"/><path d="M6 4h16M6 10h16M6 17h16" stroke="#226" stroke-dasharray="3 1"/></svg></button>
      <button class="done">Done</button>
    </div>
  </main>
</div>
<footer class="msgarea d-flex mt-1">
  <div class="mt"><button class="on" aria-label="Messages"><svg width="20" height="22"><path d="M2.500 1.500h16v17h-16z" fill="#c9c6b6" stroke="#666"/><path d="M0 19l6-6 3 2-6 6z" fill="#b9a13a" stroke="#000"/></svg></button><button class="off" aria-label="Command line"><svg width="20" height="20"><path d="M.5.500h19v19H.5z" fill="#f5e98a" stroke="#000"/><path d="M3 7l3 3-3 3m5-6l3 3-3 3m5-6l3 3-3 3" fill="none" stroke="#000" stroke-width="1.500"/></svg></button></div>
  <div class="msgwrap flex-grow-1"><div class="d-flex msg"><div class="flex-grow-1">A new model database has been created.
The model "Model-1" has been created.
A total of 3 parts have been created.
The model database "e:\work\fanya\work-c14\qz-fea\case1-new.cae" has been opened.</div><button class="sbtn" aria-label="Scroll messages up"><svg width="9" height="9"><use href="#up"/></svg></button></div></div>
</footer>
</div>
<svg class="wm" viewBox="0 0 224 52" aria-hidden="true">
  <g fill="#fff" stroke="#c4c4c4"><path d="M17 34l2-5a12 10 0 1 1 9 1l-6 0z"/><path d="M49 42l-2-4a11 9 0 1 0-5 2z"/></g><g fill="#999"><circle cx="20" cy="19" r="1"/><circle cx="28" cy="19" r="1"/><circle cx="37" cy="28" r="1"/><circle cx="44" cy="28" r="1"/></g>
  <text x="60" y="40" font-family="Noto Sans CJK SC" font-size="23" fill="#fff" stroke="#b4b4b4" stroke-width="1">CAE技术联盟</text>
  <text x="112 139 165 192" y="36" font-family="Noto Sans CJK SC" font-size="22" font-weight="500" fill="#1696f0">仿真在线</text>
  <text x="102" y="51" font-family="DejaVu Sans" font-size="14" font-weight="bold" fill="#e8201c">www.1CAE.com</text>
</svg>
</body>
</html>
